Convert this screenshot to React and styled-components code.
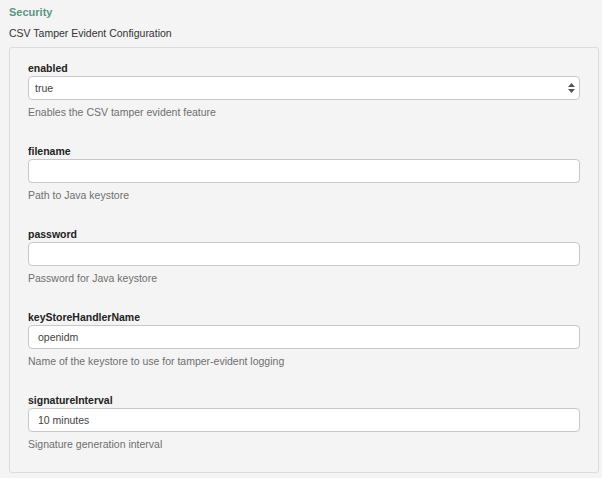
import React from 'react'
import styled, { createGlobalStyle } from 'styled-components'

const GlobalStyle = createGlobalStyle`
  html, body {
    margin: 0;
    padding: 0;
    background: #f4f4f4;
  }
  body {
    font-family: "Liberation Sans", Arial, sans-serif;
    font-size: 10.5px;
    color: #333;
  }
`

const Page = styled.div`
  padding: 5px 3px 0 9px;
`

const SectionTitle = styled.div`
  font-weight: bold;
  font-size: 11px;
  color: #5a9683;
  line-height: 14px;
`

const SectionSub = styled.div`
  margin-top: 7px;
  line-height: 14px;
  color: #333;
`

const Panel = styled.div`
  margin-top: 7px;
  border: 1px solid #dcdcdc;
  border-radius: 3px;
  background: #f4f4f4;
  padding: 13px 18px 21px 18px;
  display: flex;
  flex-direction: column;
  gap: 25px;
`

const Field = styled.div`
  display: flex;
  flex-direction: column;
`

const Label = styled.label`
  font-weight: bold;
  line-height: 14px;
  margin-bottom: 1px;
  color: #222;
`

const Box = styled.div`
  position: relative;
  height: 22px;
  border: 1px solid #c8c8c8;
  border-radius: 4px;
  background: #fff;
  display: flex;
  align-items: center;
  padding-left: ${p => (p.$select ? '6px' : '9px')};
  color: #444;
`

const Arrows = styled.svg`
  position: absolute;
  right: 4px;
  top: 6px;
`

const Help = styled.div`
  margin-top: 5px;
  line-height: 14px;
  color: #6f6f6f;
`

const fields = [
  { name: 'enabled', value: 'true', help: 'Enables the CSV tamper evident feature', select: true },
  { name: 'filename', value: '', help: 'Path to Java keystore' },
  { name: 'password', value: '', help: 'Password for Java keystore' },
  { name: 'keyStoreHandlerName', value: 'openidm', help: 'Name of the keystore to use for tamper-evident logging' },
  { name: 'signatureInterval', value: '10 minutes', help: 'Signature generation interval' },
]

export default function App() {
  return (
    <Page>
      <GlobalStyle />
      <SectionTitle>Security</SectionTitle>
      <SectionSub>CSV Tamper Evident Configuration</SectionSub>
      <Panel>
        {fields.map(f => (
          <Field key={f.name}>
            <Label>{f.name}</Label>
            <Box $select={f.select}>
              {f.value}
              {f.select && (
                <Arrows width="7" height="10" viewBox="0 0 7 10">
                  <path d="M3.5 0 L7 4 L0 4 Z M0 6 L7 6 L3.5 10 Z" fill="#555" />
                </Arrows>
              )}
            </Box>
            <Help>{f.help}</Help>
          </Field>
        ))}
      </Panel>
    </Page>
  )
}
